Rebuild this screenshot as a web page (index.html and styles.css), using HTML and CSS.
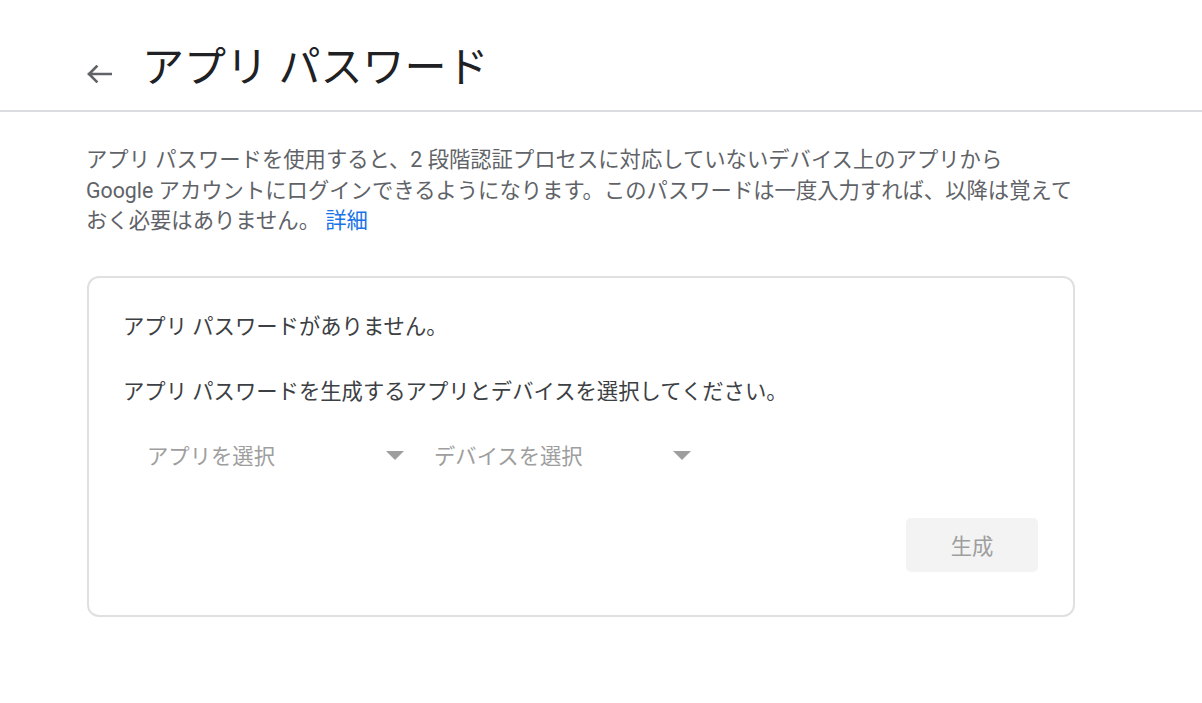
FILE: index.html
```html
<!DOCTYPE html>
<html lang="ja">
<head>
<meta charset="utf-8">
<title>アプリ パスワード</title>
<link rel="stylesheet" href="styles.css">
</head>
<body>
<header class="header">
  <a class="back" href="#" aria-label="戻る">
    <svg width="26" height="18" viewBox="0 0 26 18" aria-hidden="true">
      <path d="M25 9H3M10.5 1.5L3 9l7.5 7.5" fill="none" stroke="#5f6368" stroke-width="2.6" stroke-linecap="square"/>
    </svg>
  </a>
  <h1 class="title">アプリ パスワード</h1>
</header>
<main class="content">
  <p class="intro">アプリ パスワードを使用すると、2 段階認証プロセスに対応していないデバイス上のアプリから<br>Google アカウントにログインできるようになります。このパスワードは一度入力すれば、以降は覚えておく必要はありません。 <a class="link" href="#">詳細</a></p>
  <section class="card">
    <p class="card-text">アプリ パスワードがありません。</p>
    <p class="card-text second">アプリ パスワードを生成するアプリとデバイスを選択してください。</p>
    <div class="selects">
      <div class="select"><span>アプリを選択</span><span class="caret"></span></div>
      <div class="select"><span>デバイスを選択</span><span class="caret"></span></div>
    </div>
    <div class="actions">
      <button class="generate" disabled>生成</button>
    </div>
  </section>
</main>
</body>
</html>
```
FILE: styles.css
```css
html, body {
  margin: 0;
  padding: 0;
  background: #fff;
}
body {
  font-family: Roboto, "Noto Sans CJK JP", sans-serif;
  color: #3c4043;
}
.header {
  display: flex;
  align-items: center;
  height: 78px;
  padding-top: 32px;
  padding-left: 86px;
  border-bottom: 2px solid #dadce0;
  box-sizing: content-box;
}
.back {
  display: flex;
  width: 26px;
  height: 18px;
  margin-top: 6px;
  margin-right: 30px;
}
.title {
  margin: -6px 0 0;
  font-size: 42px;
  font-weight: 400;
  color: #202124;
  line-height: 1;
}
.content {
  padding-left: 86px;
  width: 990px;
}
.intro {
  margin: 33px 0 0;
  font-size: 21.33px;
  line-height: 30.5px;
  color: #5f6368;
}
.link {
  display: inline-block;
  line-height: 30.5px;
  color: #1a73e8;
  text-decoration: none;
}
.card {
  margin: 39px 0 0 1px;
  width: 988px;
  box-sizing: border-box;
  border: 2px solid #e0e0e0;
  border-radius: 12px;
  padding: 33px 35px 43px 34px;
}
.card-text {
  margin: 0;
  font-size: 21.33px;
  line-height: 32px;
  color: #3c4043;
}
.card-text.second {
  margin-top: 33px;
}
.selects {
  display: flex;
  margin-top: 22px;
  height: 50px;
}
.select {
  width: 287px;
  box-sizing: border-box;
  padding: 0 6px 0 24px;
  display: flex;
  align-items: center;
  justify-content: space-between;
  font-size: 21.33px;
  color: #9e9e9e;
}
.caret {
  width: 0;
  height: 0;
  border-left: 9px solid transparent;
  border-right: 9px solid transparent;
  border-top: 9px solid #9e9e9e;
  margin-top: 2px;
}
.actions {
  display: flex;
  justify-content: flex-end;
  margin-top: 38px;
}
.generate {
  width: 132px;
  height: 54px;
  border: none;
  border-radius: 5px;
  background: #f3f3f3;
  color: #9e9e9e;
  font-family: Roboto, "Noto Sans CJK JP", sans-serif;
  font-size: 21.33px;
  padding: 0;
}
```
